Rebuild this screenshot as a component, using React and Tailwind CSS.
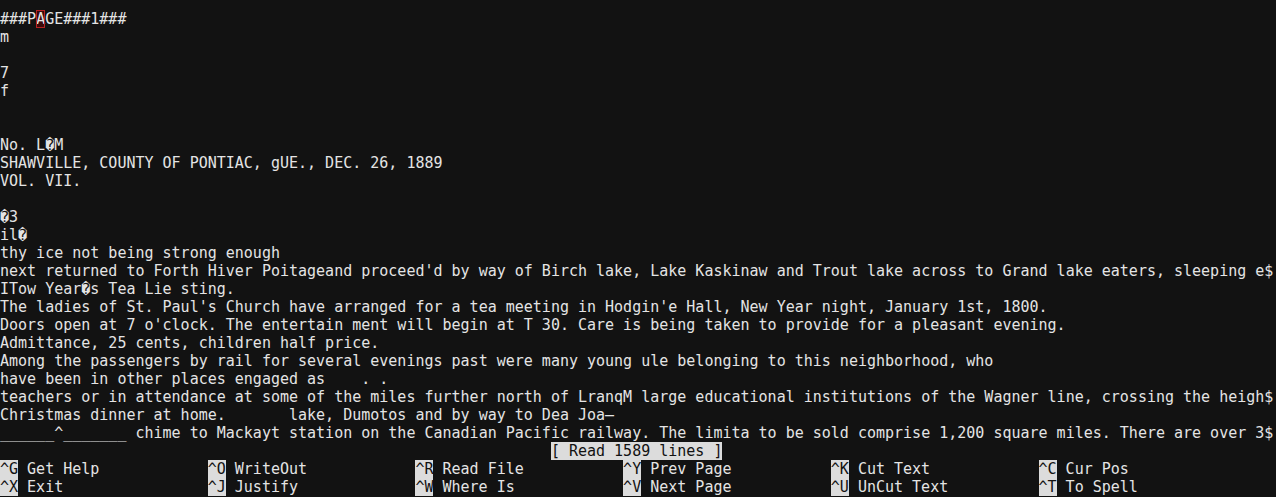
import React from "react";

const lines = [
  null,
  "m",
  "",
  "7",
  "f",
  "",
  "",
  "No. L\uFFFDM",
  "SHAWVILLE, COUNTY OF PONTIAC, gUE., DEC. 26, 1889",
  "VOL. VII.",
  "",
  "\uFFFD3",
  "il\uFFFD",
  "thy ice not being strong enough",
  "next returned to Forth Hiver Poitageand proceed'd by way of Birch lake, Lake Kaskinaw and Trout lake across to Grand lake eaters, sleeping e$",
  "ITow Year\uFFFDs Tea Lie sting.",
  "The ladies of St. Paul's Church have arranged for a tea meeting in Hodgin'e Hall, New Year night, January 1st, 1800.",
  "Doors open at 7 o'clock. The entertain ment will begin at T 30. Care is being taken to provide for a pleasant evening.",
  "Admittance, 25 cents, children half price.",
  "Among the passengers by rail for several evenings past were many young ule belonging to this neighborhood, who",
  "have been in other places engaged as    . .",
  "teachers or in attendance at some of the miles further north of LranqM large educational institutions of the Wagner line, crossing the heigh$",
  "Christmas dinner at home.       lake, Dumotos and by way to Dea Joa\u2014",
  "______^_______ chime to Mackayt station on the Canadian Pacific railway. The limita to be sold comprise 1,200 square miles. There are over 3$",
];

const help1 = [
  ["^G", "Get Help"],
  ["^O", "WriteOut"],
  ["^R", "Read File"],
  ["^Y", "Prev Page"],
  ["^K", "Cut Text"],
  ["^C", "Cur Pos"],
];
const help2 = [
  ["^X", "Exit"],
  ["^J", "Justify"],
  ["^W", "Where Is"],
  ["^V", "Next Page"],
  ["^U", "UnCut Text"],
  ["^T", "To Spell"],
];

function HelpRow({ items }) {
  return (
    <div className="flex h-[18px] leading-[18px]">
      {items.map(([k, label]) => (
        <div key={k} className="flex w-[23ch] shrink-0 whitespace-pre">
          <span className="bg-[#dcdcdc] text-[#121212]">{k}</span>
          <span> {label}</span>
        </div>
      ))}
    </div>
  );
}

export default function App() {
  return (
    <div
      className="w-[1276px] h-[497px] overflow-hidden bg-[#121212] text-[#e4e4e4] text-[15px] pt-[10px] flex flex-col"
      style={{ fontFamily: '"DejaVu Sans Mono", "Liberation Mono", monospace' }}
    >
      {lines.map((l, i) =>
        l === null ? (
          <div key={i} className="h-[18px] leading-[18px] whitespace-pre flex">
            <span>###P</span>
            <span className="bg-[#3c0a0a] outline outline-1 outline-[#b82222] -outline-offset-1 text-[#e4e4e4]">A</span>
            <span>GE###1###</span>
          </div>
        ) : (
          <div key={i} className="h-[18px] leading-[18px] whitespace-pre">
            {l}
          </div>
        )
      )}
      <div className="h-[18px] leading-[18px] whitespace-pre pl-[61ch]">
        <span className="bg-[#dcdcdc] text-[#121212]">[ Read 1589 lines ]</span>
      </div>
      <HelpRow items={help1} />
      <HelpRow items={help2} />
    </div>
  );
}
